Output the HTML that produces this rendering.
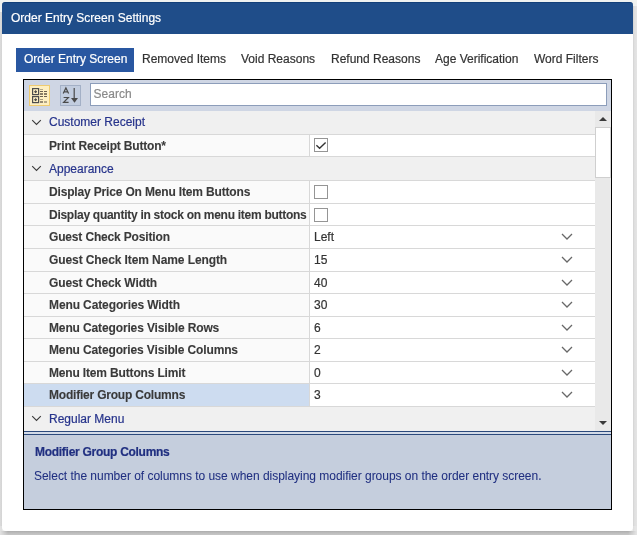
<!DOCTYPE html>
<html><head><meta charset="utf-8">
<style>
*{box-sizing:border-box;margin:0;padding:0}
html,body{width:637px;height:535px;overflow:hidden;background:#f0f2f0;-webkit-font-smoothing:antialiased;-webkit-text-stroke-width:0.2px;font-family:"Liberation Sans",sans-serif;position:relative}
.abs{position:absolute;will-change:transform}
#shl{left:0;top:12px;width:2px;height:519px;background:linear-gradient(to right,#dcdcdc,#d3d3d3)}
#shr{left:633px;top:6px;width:4px;height:526px;background:linear-gradient(to right,#d3d3d3,#e0e0e0 40%,#e4e4e4)}
#shb{left:0;top:531px;width:637px;height:4px;background:linear-gradient(to bottom,#acacac,#bdbdbd 50%,#c6c6c6)}
#shbl{left:0;top:526px;width:8px;height:9px;background:linear-gradient(to right,#e2e2e2,rgba(226,226,226,0))}
#shbr{left:628px;top:526px;width:9px;height:9px;background:linear-gradient(to right,rgba(230,230,230,0),#e6e6e6)}
#dlg{left:2px;top:20px;width:631px;height:511px;background:#fff;border-radius:0 0 4px 4px;overflow:hidden}
#title{left:2px;top:2px;width:631px;height:32px;background:#1f4d89;border-top:1px solid #134079;color:#fff;font-size:12px;line-height:30px;padding-left:9px;border-radius:3px 3px 0 0}
.tab{top:48px;height:24px;line-height:22px;font-size:12px;color:#333;white-space:nowrap}
.tab.act{background:#2957a1;color:#fff}
#gridb{left:23px;top:79px;width:589px;height:431px;border:1px solid #000}
#tb{left:24px;top:80px;width:587px;height:31px;background:#cfd6e4}
.cat{left:24px;width:571px;background:#f0f0f0;color:#27348c;font-size:12px;padding-left:25px;white-space:nowrap}
.lab{left:24px;width:285px;background:#fafafa;color:#3a3a3a;font-weight:bold;font-size:12px;letter-spacing:-0.25px;-webkit-text-stroke-width:0.1px;padding-left:25px;white-space:nowrap;overflow:hidden}
.lab.sel{background:#cddcf0}
.val{left:310px;width:285px;background:#fff;color:#333;font-size:12px;padding-left:4px;white-space:nowrap}
.line{left:24px;width:571px;height:1px;background:#d8d8d8}
.vline{left:309px;width:1px;background:#d8d8d8}
.chk{left:314px;width:14px;height:14px;border:1px solid #959595;background:#fff}
#sb{left:595px;top:111px;width:16px;height:320px;background:#e9e9e9}
#thumb{left:595px;top:127px;width:16px;height:51px;background:#fff;border:1px solid #cfcfcf}
#split1{left:24px;top:431px;width:587px;height:1px;background:#2c4a7c}
#split2{left:24px;top:432px;width:587px;height:2px;background:#d3dbe8}
#split3{left:24px;top:434px;width:587px;height:1px;background:#2c4a7c}
#desc{left:24px;top:435px;width:587px;height:74px;background:#c5cedd;color:#202f80}
</style></head><body>
<div id="shl" class="abs"></div><div id="shr" class="abs"></div><div id="shb" class="abs"></div><div id="shbl" class="abs"></div><div id="shbr" class="abs"></div>
<div id="dlg" class="abs"></div>
<div id="title" class="abs">Order Entry Screen Settings</div>
<div class="abs tab act" style="left:16px;width:118px;padding-left:8px">Order Entry Screen</div>
<div class="abs tab" style="left:142px">Removed Items</div>
<div class="abs tab" style="left:241px">Void Reasons</div>
<div class="abs tab" style="left:331px">Refund Reasons</div>
<div class="abs tab" style="left:435px">Age Verification</div>
<div class="abs tab" style="left:534px">Word Filters</div>
<div id="gridb" class="abs"></div>
<div id="tb" class="abs"></div>
<div class="abs" style="left:29px;top:85px;width:21px;height:21px;background:#fdefc2;border:1px solid #eecb72"></div>
<svg class="abs" style="left:29px;top:85px" width="21" height="21" viewBox="0 0 21 21">
 <g fill="none" stroke="#4d4d4d" stroke-width="1.2"><rect x="3.6" y="3.6" width="6" height="6"/><rect x="3.6" y="11.6" width="6" height="6"/></g>
 <g fill="#4d4d4d"><rect x="6" y="5.3" width="1.2" height="2.8"/><rect x="5.2" y="6.1" width="2.8" height="1.2"/><rect x="6" y="13.3" width="1.2" height="2.8"/><rect x="5.2" y="14.1" width="2.8" height="1.2"/></g>
 <g fill="#6a6050"><rect x="11" y="4" width="3" height="1" opacity="0.5"/><rect x="11" y="6" width="3" height="1"/><rect x="15" y="6" width="3" height="1"/><rect x="11" y="8" width="3" height="2" opacity="0.8"/><rect x="15" y="8" width="3" height="2" opacity="0.8"/>
 <rect x="11" y="11" width="3" height="1"/><rect x="15" y="11" width="3" height="1"/><rect x="11" y="14" width="3" height="1" opacity="0.6"/><rect x="11" y="16" width="3" height="2" opacity="0.7"/><rect x="15" y="16" width="3" height="2" opacity="0.5"/></g>
</svg>
<div class="abs" style="left:60px;top:85px;width:21px;height:21px;background:#c2cddf;border:1px solid #a3b0c6"></div>
<svg class="abs" style="left:60px;top:85px" width="21" height="21" viewBox="0 0 21 21">
 <g fill="none" stroke="#4a4a4a" stroke-width="1.2"><path d="M3.2 8.6 L5.9 3 L8.6 8.6 M4.1 6.8 H7.7"/><path d="M3.6 12.5 H8.4 L3.6 17.4 H8.6"/><path d="M14.2 3 V13"/></g>
 <path d="M11 13 H18 L14.5 17.8Z" fill="#4a4a4a"/>
</svg>
<div class="abs" style="left:90px;top:83px;width:517px;height:23px;background:#fff;border:1px solid #8c9dba;font-size:12px;line-height:21px;color:#8a8a8a;padding-left:2.6px">Search</div>
<div class="abs cat" style="top:111px;height:23px;line-height:22px">Customer Receipt</div>
<svg class="abs" style="left:31px;top:119px" width="11" height="7" viewBox="0 0 11 7"><path d="M1.2 1.2 L5.5 5.5 L9.8 1.2" fill="none" stroke="#3a3a3a" stroke-width="1.1"/></svg>
<div class="abs line" style="top:134px"></div>
<div class="abs lab" style="top:135px;height:21px;line-height:22px;letter-spacing:-0.183px">Print Receipt Button*</div>
<div class="abs val" style="top:135px;height:21px;line-height:22px"></div>
<div class="abs chk" style="top:138px"></div>
<svg class="abs" style="left:314px;top:138px" width="14" height="14" viewBox="0 0 14 14"><path d="M2.4 7.2 L5.6 10.2 L11.6 4.4" fill="none" stroke="#333" stroke-width="1.4"/></svg>
<div class="abs line" style="top:156px"></div>
<div class="abs cat" style="top:157px;height:23px;line-height:24px">Appearance</div>
<svg class="abs" style="left:31px;top:165px" width="11" height="7" viewBox="0 0 11 7"><path d="M1.2 1.2 L5.5 5.5 L9.8 1.2" fill="none" stroke="#3a3a3a" stroke-width="1.1"/></svg>
<div class="abs line" style="top:180px"></div>
<div class="abs lab" style="top:181px;height:22px;line-height:22px;letter-spacing:-0.162px">Display Price On Menu Item Buttons</div>
<div class="abs val" style="top:181px;height:22px;line-height:22px"></div>
<div class="abs chk" style="top:185px"></div>
<div class="abs line" style="top:203px"></div>
<div class="abs lab" style="top:204px;height:21px;line-height:22px;letter-spacing:-0.272px">Display quantity in stock on menu item buttons</div>
<div class="abs val" style="top:204px;height:21px;line-height:22px"></div>
<div class="abs chk" style="top:208px"></div>
<div class="abs line" style="top:225px"></div>
<div class="abs lab" style="top:226px;height:22px;line-height:22px;letter-spacing:-0.160px">Guest Check Position</div>
<div class="abs val" style="top:226px;height:22px;line-height:22px">Left</div>
<svg class="abs" style="left:561px;top:233px" width="12" height="8" viewBox="0 0 12 8"><path d="M1 1 L6 6 L11 1" fill="none" stroke="#686868" stroke-width="1.3"/></svg>
<div class="abs line" style="top:248px"></div>
<div class="abs lab" style="top:249px;height:22px;line-height:22px;letter-spacing:-0.093px">Guest Check Item Name Length</div>
<div class="abs val" style="top:249px;height:22px;line-height:22px">15</div>
<svg class="abs" style="left:561px;top:256px" width="12" height="8" viewBox="0 0 12 8"><path d="M1 1 L6 6 L11 1" fill="none" stroke="#686868" stroke-width="1.3"/></svg>
<div class="abs line" style="top:271px"></div>
<div class="abs lab" style="top:272px;height:21px;line-height:22px;letter-spacing:-0.110px">Guest Check Width</div>
<div class="abs val" style="top:272px;height:21px;line-height:22px">40</div>
<svg class="abs" style="left:561px;top:279px" width="12" height="8" viewBox="0 0 12 8"><path d="M1 1 L6 6 L11 1" fill="none" stroke="#686868" stroke-width="1.3"/></svg>
<div class="abs line" style="top:293px"></div>
<div class="abs lab" style="top:294px;height:22px;line-height:22px;letter-spacing:-0.112px">Menu Categories Width</div>
<div class="abs val" style="top:294px;height:22px;line-height:22px">30</div>
<svg class="abs" style="left:561px;top:301px" width="12" height="8" viewBox="0 0 12 8"><path d="M1 1 L6 6 L11 1" fill="none" stroke="#686868" stroke-width="1.3"/></svg>
<div class="abs line" style="top:316px"></div>
<div class="abs lab" style="top:317px;height:21px;line-height:22px;letter-spacing:-0.132px">Menu Categories Visible Rows</div>
<div class="abs val" style="top:317px;height:21px;line-height:22px">6</div>
<svg class="abs" style="left:561px;top:324px" width="12" height="8" viewBox="0 0 12 8"><path d="M1 1 L6 6 L11 1" fill="none" stroke="#686868" stroke-width="1.3"/></svg>
<div class="abs line" style="top:338px"></div>
<div class="abs lab" style="top:339px;height:22px;line-height:22px;letter-spacing:-0.137px">Menu Categories Visible Columns</div>
<div class="abs val" style="top:339px;height:22px;line-height:22px">2</div>
<svg class="abs" style="left:561px;top:346px" width="12" height="8" viewBox="0 0 12 8"><path d="M1 1 L6 6 L11 1" fill="none" stroke="#686868" stroke-width="1.3"/></svg>
<div class="abs line" style="top:361px"></div>
<div class="abs lab" style="top:362px;height:21px;line-height:22px;letter-spacing:-0.163px">Menu Item Buttons Limit</div>
<div class="abs val" style="top:362px;height:21px;line-height:22px">0</div>
<svg class="abs" style="left:561px;top:369px" width="12" height="8" viewBox="0 0 12 8"><path d="M1 1 L6 6 L11 1" fill="none" stroke="#686868" stroke-width="1.3"/></svg>
<div class="abs line" style="top:383px"></div>
<div class="abs lab sel" style="top:384px;height:22px;line-height:22px;letter-spacing:-0.205px">Modifier Group Columns</div>
<div class="abs val" style="top:384px;height:22px;line-height:22px">3</div>
<svg class="abs" style="left:561px;top:391px" width="12" height="8" viewBox="0 0 12 8"><path d="M1 1 L6 6 L11 1" fill="none" stroke="#686868" stroke-width="1.3"/></svg>
<div class="abs line" style="top:406px"></div>
<div class="abs cat" style="top:407px;height:24px;line-height:24px">Regular Menu</div>
<svg class="abs" style="left:31px;top:415px" width="11" height="7" viewBox="0 0 11 7"><path d="M1.2 1.2 L5.5 5.5 L9.8 1.2" fill="none" stroke="#3a3a3a" stroke-width="1.1"/></svg>
<div class="abs vline" style="top:135px;height:21px"></div>
<div class="abs vline" style="top:181px;height:22px"></div>
<div class="abs vline" style="top:204px;height:21px"></div>
<div class="abs vline" style="top:226px;height:22px"></div>
<div class="abs vline" style="top:249px;height:22px"></div>
<div class="abs vline" style="top:272px;height:21px"></div>
<div class="abs vline" style="top:294px;height:22px"></div>
<div class="abs vline" style="top:317px;height:21px"></div>
<div class="abs vline" style="top:339px;height:22px"></div>
<div class="abs vline" style="top:362px;height:21px"></div>
<div class="abs vline" style="top:384px;height:22px"></div>
<div id="sb" class="abs"></div>
<div id="thumb" class="abs"></div>
<svg class="abs" style="left:599px;top:117px" width="8" height="4" viewBox="0 0 8 4"><path d="M0 4 L4 0 L8 4Z" fill="#3a3a3a"/></svg>
<svg class="abs" style="left:599px;top:421px" width="8" height="4" viewBox="0 0 8 4"><path d="M0 0 L4 4 L8 0Z" fill="#3a3a3a"/></svg>
<div id="split1" class="abs"></div>
<div id="split2" class="abs"></div>
<div id="split3" class="abs"></div>
<div id="desc" class="abs">
  <div class="abs" style="left:11px;top:10px;font-weight:bold;font-size:12px;letter-spacing:-0.28px;white-space:nowrap">Modifier Group Columns</div>
  <div class="abs" style="left:10px;top:34px;font-size:12px;letter-spacing:-0.03px;white-space:nowrap;-webkit-text-stroke-width:0.05px">Select the number of columns to use when displaying modifier groups on the order entry screen.</div>
</div>
</body></html>
